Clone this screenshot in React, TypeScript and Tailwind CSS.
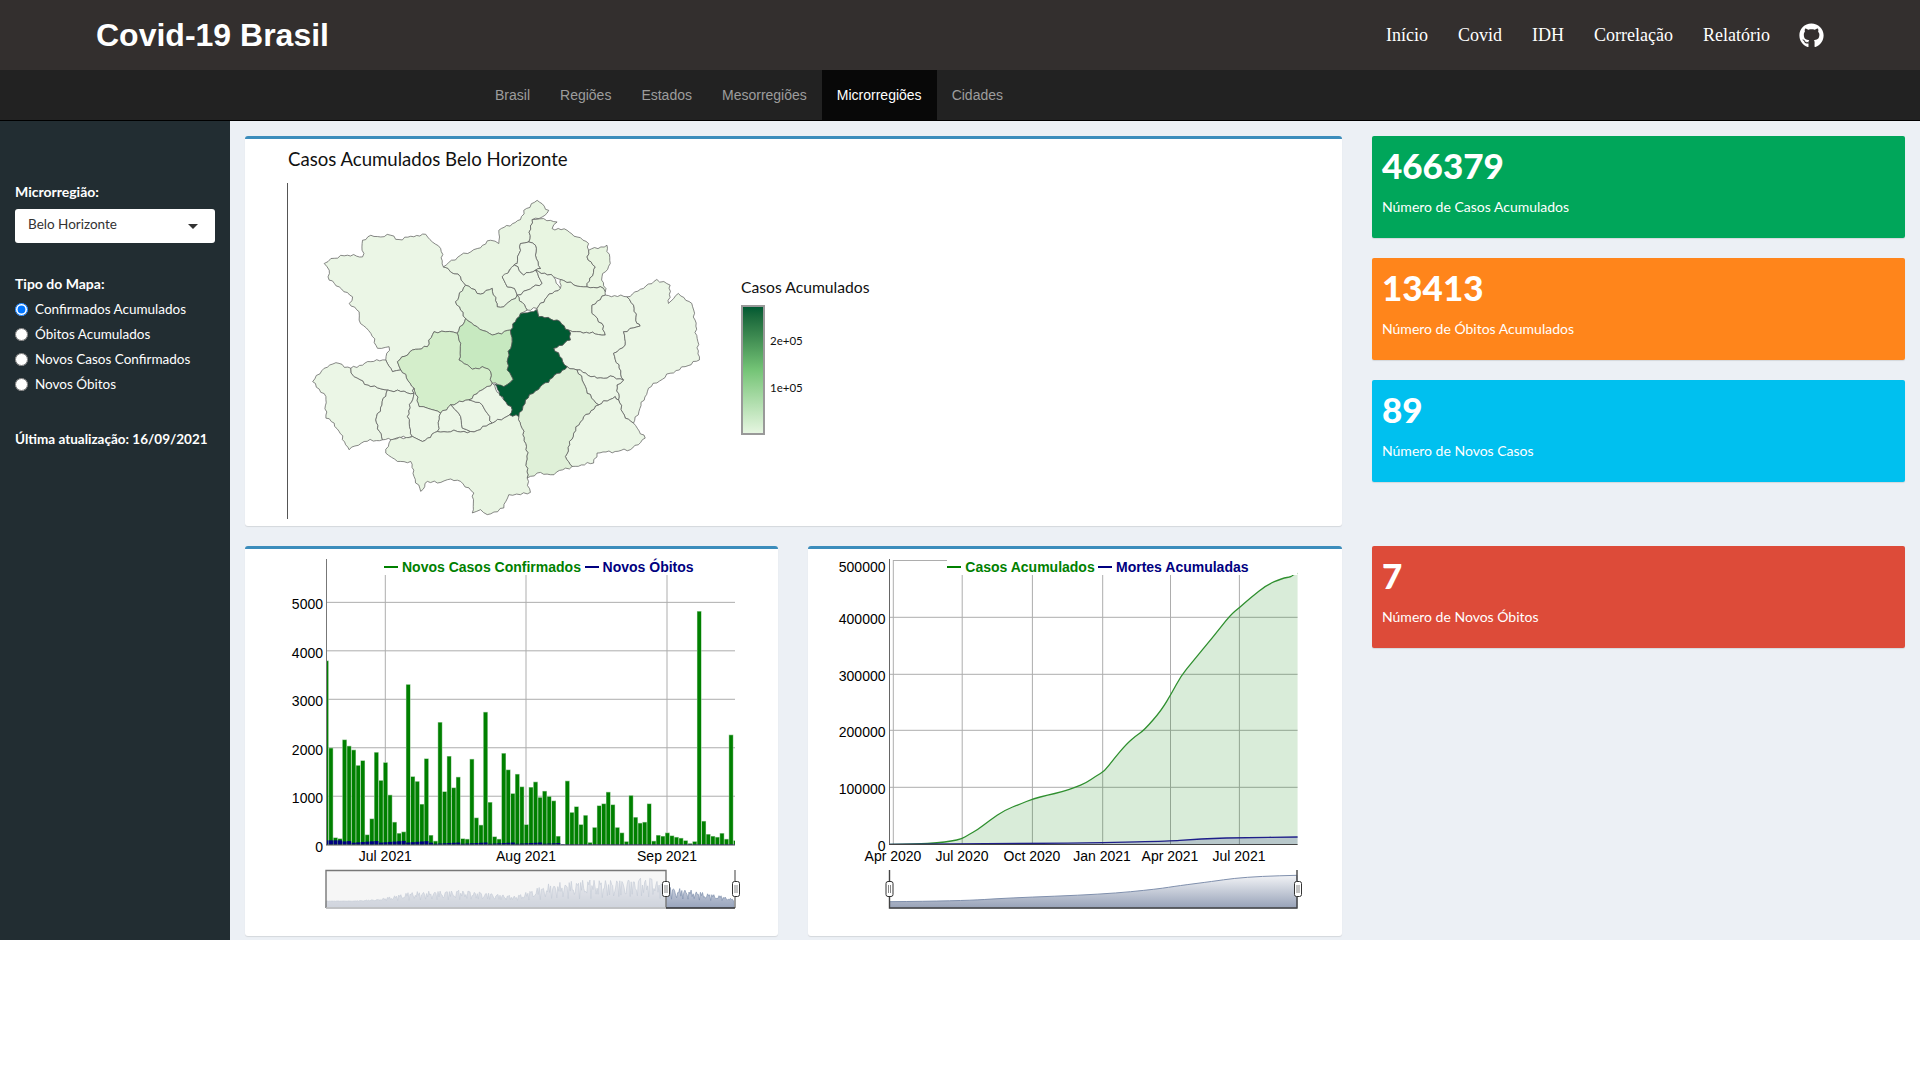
import { FaGithub } from "react-icons/fa";

const topLinks = ["Início", "Covid", "IDH", "Correlação", "Relatório"];
const tabs = ["Brasil", "Regiões", "Estados", "Mesorregiões", "Microrregiões", "Cidades"];
const mapTypes = ["Confirmados Acumulados", "Óbitos Acumulados", "Novos Casos Confirmados", "Novos Óbitos"];

const boxes = [
  { value: "466379", label: "Número de Casos Acumulados", color: "bg-[#00a65a]", space: "" },
  { value: "13413", label: "Número de Óbitos Acumulados", color: "bg-[#ff851b]", space: "mt-5" },
  { value: "89", label: "Número de Novos Casos", color: "bg-[#00c0ef]", space: "mt-5" },
  { value: "7", label: "Número de Novos Óbitos", color: "bg-[#dd4b39]", space: "mt-[64px]" },
];

type Pt = [number, number];

const L = "#ebf6e6";
const regions: { fill: string; pts: Pt[] }[] = [
  { fill: L, pts: [[215,180],[240,165],[270,170],[300,165],[325,178],[360,168],[405,162],[425,185],[450,205],[458,260],[480,275],[510,290],[525,315],[495,365],[525,415],[500,460],[465,455],[430,455],[410,500],[365,510],[320,545],[330,570],[305,575],[285,540],[295,500],[260,505],[240,460],[205,420],[205,395],[175,370],[185,350],[145,320],[115,300],[115,270],[100,250],[120,235],[170,225],[215,230]] },
  { fill: "#e9f5e3", pts: [[458,260],[510,225],[560,205],[600,180],[625,190],[625,150],[690,118],[700,90],[740,60],[775,90],[755,110],[725,118],[715,185],[690,190],[680,250],[635,290],[650,320],[672,325],[680,345],[640,380],[620,380],[605,325],[570,342],[525,315],[510,290],[480,275]] },
  { fill: "#e8f5e1", pts: [[725,118],[760,115],[800,125],[785,145],[830,150],[860,170],[895,190],[895,210],[890,230],[915,260],[890,320],[860,318],[810,298],[790,290],[735,270],[750,265],[735,225],[735,195],[715,185]] },
  { fill: "#e8f5e1", pts: [[895,210],[950,195],[960,250],[935,290],[945,335],[940,325],[890,320],[915,260],[890,230]] },
  { fill: L, pts: [[690,190],[715,185],[735,195],[735,225],[750,265],[735,270],[700,285],[672,255],[680,250]] },
  { fill: L, pts: [[635,290],[672,255],[700,285],[735,270],[755,310],[710,330],[680,345],[672,325],[650,320]] },
  { fill: L, pts: [[735,270],[790,290],[810,325],[770,350],[740,385],[710,390],[680,345],[710,330],[755,310]] },
  { fill: "#e8f5e1", pts: [[810,298],[860,318],[890,320],[940,325],[945,345],[905,375],[905,400],[935,430],[945,465],[915,462],[870,455],[835,450],[800,420],[745,410],[740,385],[770,350],[810,325]] },
  { fill: L, pts: [[945,345],[1010,350],[1030,375],[1040,430],[1050,438],[1000,455],[1005,495],[970,520],[1000,600],[970,590],[920,595],[860,570],[830,560],[790,505],[840,480],[835,450],[870,455],[915,462],[945,465],[935,430],[905,400],[905,375]] },
  { fill: L, pts: [[1010,350],[1060,325],[1100,298],[1140,315],[1135,370],[1165,340],[1205,370],[1215,420],[1228,540],[1185,560],[1140,580],[1075,625],[1030,730],[1005,715],[985,660],[980,615],[1000,600],[970,520],[1005,495],[1000,455],[1050,438],[1040,430],[1030,375]] },
  { fill: L, pts: [[860,570],[920,595],[970,590],[1000,600],[980,615],[985,660],[975,650],[925,675],[890,640],[880,610]] },
  { fill: L, pts: [[925,675],[975,650],[985,660],[1005,715],[1030,730],[1065,775],[1020,810],[920,820],[910,850],[845,860],[825,830],[850,760],[880,710]] },
  { fill: "#dff0d8", pts: [[830,560],[860,570],[880,610],[890,640],[925,675],[880,710],[850,760],[825,830],[845,860],[780,885],[740,880],[710,895],[708,800],[685,710],[705,660],[750,620]] },
  { fill: "#e0f2da", pts: [[525,315],[570,342],[605,325],[620,380],[640,380],[680,345],[710,390],[690,400],[660,450],[605,465],[560,440],[525,415],[495,365]] },
  { fill: "#c7e9c0", pts: [[525,415],[560,440],[605,465],[660,450],[665,485],[650,545],[650,570],[668,598],[640,620],[605,610],[600,575],[575,560],[545,568],[505,540],[510,490],[500,460]] },
  { fill: "#d4eecb", pts: [[320,545],[365,510],[410,500],[430,455],[465,455],[500,460],[510,490],[505,540],[545,568],[575,560],[600,575],[605,610],[575,630],[535,660],[480,675],[450,700],[410,685],[385,680],[370,625],[330,570]] },
  { fill: L, pts: [[65,605],[100,565],[135,548],[180,565],[190,590],[240,620],[290,630],[255,720],[275,780],[220,785],[175,810],[130,730],[105,715],[105,650]] },
  { fill: L, pts: [[180,565],[240,545],[285,540],[305,575],[330,570],[370,625],[370,640],[290,630],[240,620],[190,590]] },
  { fill: L, pts: [[290,630],[370,640],[350,710],[365,770],[275,780],[255,720]] },
  { fill: L, pts: [[370,640],[370,625],[385,680],[410,685],[450,700],[440,755],[395,785],[365,770],[350,710]] },
  { fill: L, pts: [[450,700],[480,675],[510,710],[515,745],[540,755],[500,755],[440,755]] },
  { fill: L, pts: [[480,675],[535,660],[575,675],[605,730],[560,752],[540,755],[515,745],[510,710]] },
  { fill: L, pts: [[535,660],[575,630],[605,610],[640,660],[665,690],[658,705],[605,730],[575,675]] },
  { fill: "#e9f5e3", pts: [[285,820],[300,780],[365,770],[395,785],[440,755],[500,755],[540,755],[560,752],[605,730],[658,705],[685,710],[708,800],[710,895],[720,938],[690,945],[655,945],[640,985],[590,1005],[570,990],[545,1000],[550,940],[510,905],[470,900],[440,910],[410,905],[390,935],[370,890],[360,845],[320,845]] },
  { fill: "#005a32", pts: [[612,612],[640,620],[668,598],[650,570],[650,545],[665,485],[660,450],[690,400],[720,395],[738,388],[745,410],[800,420],[835,450],[840,480],[790,505],[830,560],[750,620],[705,660],[685,710],[658,705],[665,690],[640,660]] },
];

// wiggle an edge the same way from both sides, so neighbours keep a shared border
function jaggedPath(pts: Pt[]) {
  let d = "";
  pts.forEach((a, i) => {
    const b = pts[(i + 1) % pts.length];
    const flip = a[0] > b[0] || (a[0] === b[0] && a[1] > b[1]);
    const [p, q] = flip ? [b, a] : [a, b];
    const len = Math.hypot(q[0] - p[0], q[1] - p[1]);
    const n = Math.max(2, Math.floor(len / 3));
    const seed = p[0] * 0.37 + p[1] * 0.73 + q[0] * 0.11 + q[1] * 0.53;
    const line: Pt[] = [];
    for (let k = 0; k <= n; k++) {
      const t = k / n;
      const edge = k === 0 || k === n ? 0 : 1;
      const off = edge * 1.5 * Math.sin(seed + k * 2.4) * Math.cos(seed * 1.7 + k * 1.3);
      line.push([p[0] + (q[0] - p[0]) * t - ((q[1] - p[1]) / len) * off, p[1] + (q[1] - p[1]) * t + ((q[0] - p[0]) / len) * off]);
    }
    if (flip) line.reverse();
    line.forEach((c, k) => {
      if (k === 0 && i > 0) return;
      d += `${i === 0 && k === 0 ? "M" : "L"}${c[0].toFixed(1)} ${c[1].toFixed(1)}`;
    });
  });
  return d + "Z";
}

const daily = [3800,2000,150,130,2170,2040,1960,1640,1740,210,540,1910,1330,1700,1030,470,240,270,3310,1410,1310,840,1780,200,80,2530,1100,1830,1180,1400,130,120,1770,560,410,2740,880,170,120,1890,1550,1060,1460,1200,420,1190,1300,980,1110,1000,910,180,0,1320,670,790,420,610,50,360,810,850,1090,830,360,250,70,1020,570,450,470,850,80,200,180,250,190,160,140,90,30,70,4820,490,220,180,160,240,120,2270,90];
const deaths = daily.map((_, i) => (i < 4 ? 90 : i < 24 ? 40 + ((i * 7) % 40) : i < 52 ? 20 + ((i * 5) % 30) : 12));

const barY = (v: number) => 844.7 - v * 0.04847;

const envelope: Pt[] = [[251,1083],[330,1083],[400,1078],[500,1055],[650,1050],[800,1068],[900,1030],[1000,1020],[1100,1020],[1200,1010],[1238,1040],[1300,1048],[1400,1068],[1435,1078]];

function rangeSeries() {
  let d = "M326 908";
  for (let x = 251; x <= 1435; x += 3) {
    let top = 1084;
    for (let i = 0; i < envelope.length - 1; i++) {
      const [x0, y0] = envelope[i];
      const [x1, y1] = envelope[i + 1];
      if (x >= x0 && x <= x1) top = y0 + ((y1 - y0) * (x - x0)) / (x1 - x0);
    }
    const amp = (1084 - top) * 0.9;
    const y = top + amp * Math.abs(Math.sin(x * 0.47) * Math.cos(x * 0.19 + 1));
    d += `L${(240 + x / 2.904).toFixed(1)} ${(540 + Math.min(y, 1100) / 3).toFixed(1)}`;
  }
  return d + "L734 908Z";
}

const page = ([x, y]: Pt): Pt => [800 + x / 2.904, 540 + y / 3];

function smoothLine(pts: Pt[]) {
  const p = pts.map(page);
  let d = `M${p[0][0].toFixed(1)} ${p[0][1].toFixed(1)}`;
  for (let i = 1; i < p.length - 1; i++) {
    const mx = (p[i][0] + p[i + 1][0]) / 2;
    const my = (p[i][1] + p[i + 1][1]) / 2;
    d += `Q${p[i][0].toFixed(1)} ${p[i][1].toFixed(1)} ${mx.toFixed(1)} ${my.toFixed(1)}`;
  }
  const last = p[p.length - 1];
  return d + `L${last[0].toFixed(1)} ${last[1].toFixed(1)}`;
}

const casesCurve: Pt[] = [[260,913],[340,912],[400,909],[440,903],[470,897],[490,884],[515,870],[550,842],[595,810],[640,792],[675,777],[720,765],[760,756],[800,742],[830,729],[860,708],[885,693],[910,658],[950,610],[975,588],[1000,570],[1050,510],[1080,458],[1105,410],[1140,365],[1200,290],[1250,225],[1276,203],[1310,172],[1355,135],[1400,115],[1428,110],[1430,105],[1445,100]];
const deathsCurve: Pt[] = [[260,913],[675,911],[879,908],[1076,903],[1130,899],[1200,895],[1276,893],[1445,891]];
const rangeCurve: Pt[] = [[260,1085],[470,1083],[600,1074],[880,1063],[1040,1047],[1100,1037],[1200,1024],[1260,1015],[1340,1009],[1443,1006]];

function Handle({ x }: { x: number }) {
  return (
    <g>
      <rect x={x - 3.5} y={881.5} width={7} height={15} rx={2} fill="#fff" stroke="#333" strokeWidth={1} />
      <path d={`M${x - 1} 885V893M${x + 1} 885V893`} stroke="#888" strokeWidth={1} />
    </g>
  );
}

function LegendItem({ lineX, textX, color, label }: { lineX: number; textX: number; color: string; label: string }) {
  return (
    <g>
      <line x1={lineX} x2={lineX + 14} y1={567} y2={567} stroke={color} strokeWidth={2} />
      <text x={textX} y={572} fontFamily="Liberation Sans" fontSize={14} fontWeight={700} fill={color}>
        {label}
      </text>
    </g>
  );
}

function BarsChart() {
  const grid = [0, 1000, 2000, 3000, 4000, 5000];
  const months = [
    { label: "Jul 2021", x: 385.3 },
    { label: "Aug 2021", x: 526 },
    { label: "Sep 2021", x: 667 },
  ];
  return (
    <svg viewBox="245 549 533 387" className="block w-[533px] h-[387px]">
      <defs>
        <clipPath id="plot-a">
          <rect x={326.4} y={555} width={408.6} height={291} />
        </clipPath>
        <linearGradient id="range-a" x1="0" x2="0" y1="0" y2="1">
          <stop offset="0" stopColor="#dde0ea" />
          <stop offset="1" stopColor="#98a4bc" />
        </linearGradient>
      </defs>
      {grid.slice(1).map((v) => (
        <line key={v} x1={326} x2={735} y1={barY(v)} y2={barY(v)} stroke="#adadad" />
      ))}
      {months.map((m) => (
        <line key={m.label} x1={m.x} x2={m.x} y1={575} y2={845} stroke="#adadad" />
      ))}
      <g clipPath="url(#plot-a)">
        {daily.map((v, i) => (
          <g key={i}>
            <rect x={324.1 + 4.547 * i} y={barY(v)} width={4.55} height={844.7 - barY(v)} fill="#8fc58f" />
            <rect x={324.6 + 4.547 * i} y={barY(v) + 0.6} width={3.55} height={Math.max(0, 844.1 - barY(v))} fill="#008000" />
          </g>
        ))}
        {deaths.map((v, i) => (
          <rect key={i} x={324.4 + 4.547 * i} y={barY(v)} width={4} height={844.7 - barY(v)} fill="#000080" />
        ))}
      </g>
      <line x1={326.5} x2={326.5} y1={559} y2={845} stroke="#777" />
      <line x1={326} x2={735} y1={845} y2={845} stroke="#555" />
      <rect x={384} y={555} width={351} height={20} fill="#fff" />
      <LegendItem lineX={384} textX={402} color="#008000" label="Novos Casos Confirmados" />
      <LegendItem lineX={585} textX={602.6} color="#000080" label="Novos Óbitos" />
      {grid.map((v) => (
        <text key={v} x={323} y={barY(v) + 7} textAnchor="end" fontFamily="Liberation Sans" fontSize={14} fill="#000">
          {v}
        </text>
      ))}
      {months.map((m) => (
        <text key={m.label} x={m.x} y={861} textAnchor="middle" fontFamily="Liberation Sans" fontSize={14} fill="#000">
          {m.label}
        </text>
      ))}
      <path d={rangeSeries()} fill="url(#range-a)" stroke="#8090ad" strokeWidth={0.7} />
      <rect x={326} y={870} width={340} height={38} fill="#f0f0f0" fillOpacity={0.62} />
      <path d="M326 908V870.5H666V908M735 908V870" fill="none" stroke="#777" strokeWidth={1.4} />
      <line x1={666} x2={735} y1={908} y2={908} stroke="#333" strokeWidth={1.4} />
      <line x1={326} x2={666} y1={908} y2={908} stroke="#bbb" strokeWidth={1.4} />
      <Handle x={666} />
      <Handle x={736} />
    </svg>
  );
}

function CumulativeChart() {
  const hLines = [787.3, 730.3, 674.3, 617.3];
  const yLabels = [
    { t: "500000", y: 572 },
    { t: "400000", y: 624 },
    { t: "300000", y: 681 },
    { t: "200000", y: 737 },
    { t: "100000", y: 794 },
    { t: "0", y: 851 },
  ];
  const months = [
    { label: "Apr 2020", x: 893.3, text: 893 },
    { label: "Jul 2020", x: 962.2, text: 962 },
    { label: "Oct 2020", x: 1032.4, text: 1032 },
    { label: "Jan 2021", x: 1102.7, text: 1102 },
    { label: "Apr 2021", x: 1170.5, text: 1170 },
    { label: "Jul 2021", x: 1239.4, text: 1239 },
  ];
  const cases = smoothLine(casesCurve);
  const mortes = smoothLine(deathsCurve);
  return (
    <svg viewBox="808 549 534 387" className="block w-[534px] h-[387px]">
      <defs>
        <linearGradient id="range-b" x1="0" x2="0" y1="0" y2="1">
          <stop offset="0" stopColor="#f2f3f6" />
          <stop offset="1" stopColor="#97a2b8" />
        </linearGradient>
      </defs>
      <line x1={893} x2={947} y1={560.5} y2={560.5} stroke="#adadad" />
      {hLines.map((y) => (
        <line key={y} x1={889} x2={1297.6} y1={y} y2={y} stroke="#adadad" />
      ))}
      {months.map((m) => (
        <line key={m.label} x1={m.x} x2={m.x} y1={m.x < 900 ? 560 : 575} y2={844} stroke="#adadad" />
      ))}
      <path d={`${cases}L1297.6 844.5L889.5 844.5Z`} fill="#008000" fillOpacity={0.15} />
      <path d={cases} fill="none" stroke="#2f8f2f" strokeWidth={1.3} />
      <path d={`${mortes}L1297.6 844.5L889.5 844.5Z`} fill="#000080" fillOpacity={0.15} />
      <path d={mortes} fill="none" stroke="#1f1f8a" strokeWidth={1.3} />
      <line x1={889.5} x2={889.5} y1={559} y2={845} stroke="#666" />
      <line x1={889} x2={1297.6} y1={844.5} y2={844.5} stroke="#444" />
      <rect x={947} y={558} width={350.6} height={17} fill="#fff" />
      <LegendItem lineX={947} textX={965.3} color="#008000" label="Casos Acumulados" />
      <LegendItem lineX={1098} textX={1116} color="#000080" label="Mortes Acumuladas" />
      {yLabels.map((l) => (
        <text key={l.t} x={885.5} y={l.y} textAnchor="end" fontFamily="Liberation Sans" fontSize={14} fill="#000">
          {l.t}
        </text>
      ))}
      {months.map((m) => (
        <text key={m.label} x={m.text} y={861} textAnchor="middle" fontFamily="Liberation Sans" fontSize={14} fill="#000">
          {m.label}
        </text>
      ))}
      <path d={`${smoothLine(rangeCurve)}L1297 908L889.5 908Z`} fill="url(#range-b)" stroke="#8090ad" strokeWidth={1} />
      <path d="M889.5 870V908H1297V870" fill="none" stroke="#444" strokeWidth={1.4} />
      <Handle x={889.5} />
      <Handle x={1298} />
    </svg>
  );
}

function App() {
  return (
    <div className="w-full h-[1080px] bg-white font-['Lato',sans-serif]">
      <header className="h-[70px] bg-[#332f2e] flex items-center justify-between pl-24 pr-[95px]">
        <h1 className="text-[32px] font-bold text-white font-['Liberation_Sans',sans-serif]">Covid-19 Brasil</h1>
        <nav className="flex items-center gap-[30px] text-[18px] text-white font-['Liberation_Serif',serif]">
          {topLinks.map((link) => (
            <a key={link}>{link}</a>
          ))}
          <FaGithub size={25} className="-ml-px mr-px" />
        </nav>
      </header>

      <nav className="h-[51px] bg-[#222222] border-b border-black flex pl-[480px] text-[14px] text-[#9d9d9d] font-['Liberation_Sans',sans-serif]">
        {tabs.map((tab) => (
          <a
            key={tab}
            className={tab === "Microrregiões" ? "px-[15px] leading-[50px] bg-[#080808] text-white" : "px-[15px] leading-[50px]"}
          >
            {tab}
          </a>
        ))}
      </nav>

      <div className="h-[819px] flex bg-[#ecf0f5]">
        {/* sidebar */}
        <aside className="w-[230px] shrink-0 bg-[#222d32] text-white px-[15px] pt-[61px] text-[14px]">
          <p className="font-bold leading-[20px]">Microrregião:</p>
          <div className="mt-[7px] h-[34px] w-[200px] bg-white rounded-[3px] text-[#333] flex items-center justify-between pl-[13px] pr-[17px] text-[13.5px]">
            <span className="-mt-[3px]">Belo Horizonte</span>
            <span className="w-0 h-0 border-x-[5px] border-x-transparent border-t-[5px] border-t-[#333]"></span>
          </div>
          <p className="mt-[31px] font-bold leading-[20px]">Tipo do Mapa:</p>
          <div className="mt-[3px] flex flex-col">
            {mapTypes.map((type, i) => (
              <label key={type} className="h-[25px] flex items-center gap-[7px] text-[13.5px]">
                <input type="radio" name="tipo" defaultChecked={i === 0} className="w-[13px] h-[13px]" />
                {type}
              </label>
            ))}
          </div>
          <p className="mt-[32px] font-bold leading-[20px] text-[13.5px] whitespace-nowrap">Última atualização: 16/09/2021</p>
        </aside>

        {/* charts */}
        <main className="w-[1097px] ml-[15px] mt-[15px] shrink-0">
          <section className="h-[390px] bg-white border-t-[3px] border-[#3c8dbc] rounded-[3px] shadow-[0_1px_1px_rgba(0,0,0,0.1)] pl-[42px]">
            <h2 className="pt-[8px] pl-[1px] text-[18.6px] leading-[25px] text-[#111]">Casos Acumulados Belo Horizonte</h2>
            <div className="mt-[11px] flex">
              <svg viewBox="287 183 443 336" className="block w-[443px] h-[336px] border-l border-[#555]">
                {regions.map((r, i) => (
                  <path
                    key={i}
                    d={jaggedPath(r.pts.map(([x, y]) => [290 + x / 3, 180 + y / 3] as Pt))}
                    fill={r.fill}
                    stroke="#555"
                    strokeWidth={0.7}
                    strokeLinejoin="round"
                  />
                ))}
              </svg>
              <div className="ml-[11px] pt-[93px] text-[#111]">
                <p className="text-[15.7px] leading-[22px] whitespace-nowrap">Casos Acumulados</p>
                <div className="mt-[7px] relative w-[24px] h-[130px] border-2 border-[#999] bg-gradient-to-b from-[#005a32] via-[#74c476] to-[#e5f5e0]">
                  <span className="absolute left-[27px] top-[27px] text-[11.5px] leading-[14px]">2e+05</span>
                  <span className="absolute left-[27px] top-[74px] text-[11.5px] leading-[14px]">1e+05</span>
                </div>
              </div>
            </div>
          </section>
          <div className="mt-5 flex gap-[30px]">
            <section className="h-[390px] w-[533px] bg-white border-t-[3px] border-[#3c8dbc] rounded-[3px] shadow-[0_1px_1px_rgba(0,0,0,0.1)]">
              <BarsChart />
            </section>
            <section className="h-[390px] w-[534px] bg-white border-t-[3px] border-[#3c8dbc] rounded-[3px] shadow-[0_1px_1px_rgba(0,0,0,0.1)]">
              <CumulativeChart />
            </section>
          </div>
        </main>

        {/* value boxes */}
        <div className="w-[533px] ml-[30px] mt-[15px] shrink-0">
          {boxes.map((box) => (
            <div key={box.value} className={`h-[102px] rounded-[2px] shadow-[0_1px_1px_rgba(0,0,0,0.1)] text-white pl-[10px] pt-[9px] ${box.color} ${box.space}`}>
              <p className="text-[35px] font-black leading-[40px]">{box.value}</p>
              <p className="mt-[12px] text-[14px] leading-[20px]">{box.label}</p>
            </div>
          ))}
        </div>
      </div>
    </div>
  );
}

export default App;
